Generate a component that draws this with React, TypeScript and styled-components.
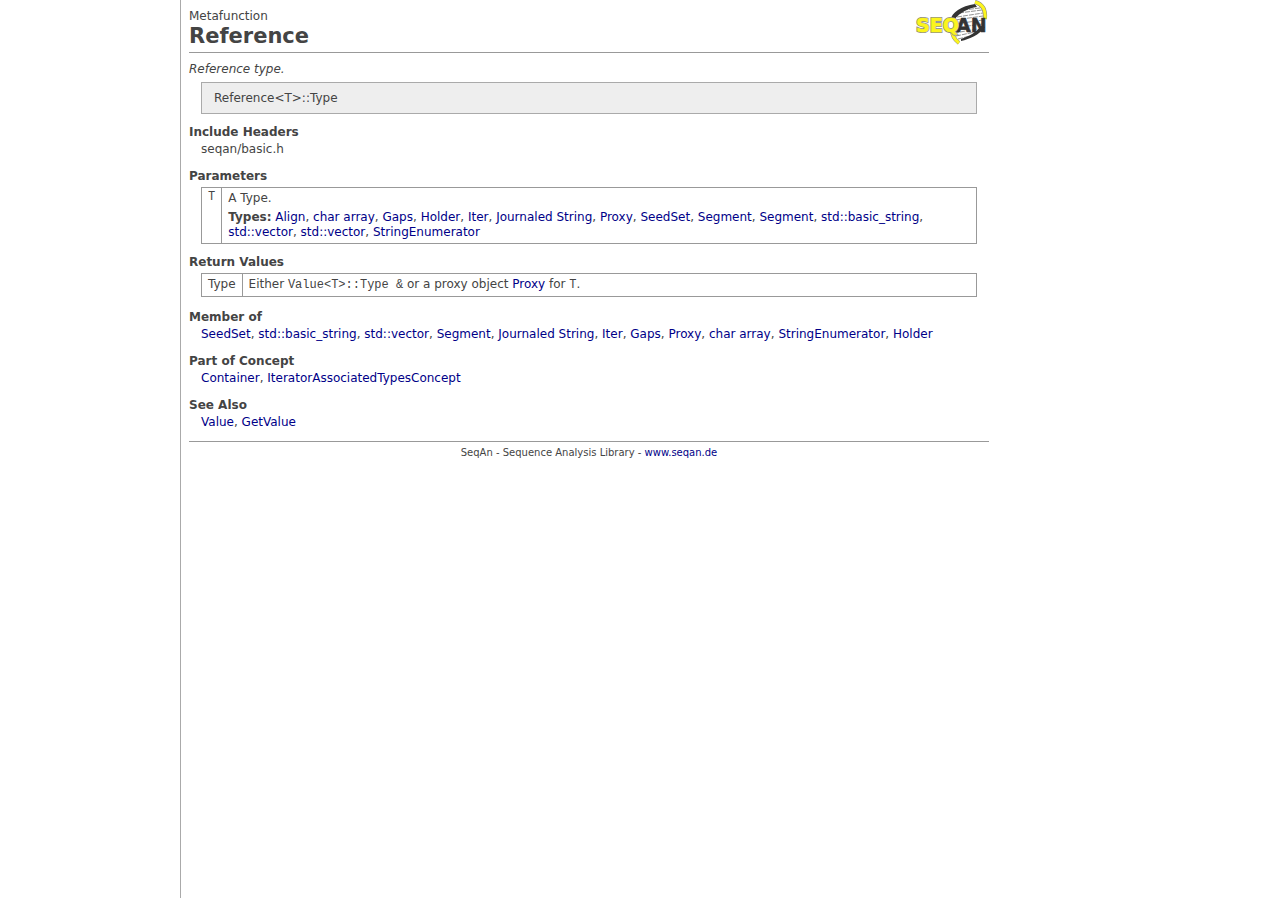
import React from "react";
import styled, { createGlobalStyle } from "styled-components";

const GlobalStyle = createGlobalStyle`
  body {
    margin: 0;
    background: #fff;
    color: #444;
    font: 12px/15px Verdana, "DejaVu Sans", sans-serif;
  }
`;

const Page = styled.div`
  box-sizing: border-box;
  min-height: 100vh;
  margin-left: 180px;
  padding: 0 8px;
  border-left: 1px solid #aaa;
`;

const Content = styled.main`
  max-width: 800px;
`;

const Header = styled.header`
  display: flex;
  justify-content: space-between;
  align-items: flex-start;
  height: 52px;
  border-bottom: 1px solid #999;
`;

const Heading = styled.div`
  padding-top: 9px;
`;

const Title = styled.h1`
  margin: 0;
  font-size: 21px;
  line-height: 24px;
`;

const Logo = styled.svg`
  display: block;
  width: 74px;
  height: 48px;
`;

const Summary = styled.p`
  margin: 9px 0 5px;
  font-style: italic;
`;

const Signature = styled.div`
  margin: 0 12px;
  padding: 8px 12px 7px;
  background: #eee;
  border: 1px solid #aaa;
`;

const Section = styled.section`
  margin-top: 11px;
`;

const SectionTitle = styled.h2`
  margin: 0 0 2px;
  font-size: 12px;
  line-height: 15px;
`;

const SectionBody = styled.div`
  margin: 0 12px;
  padding-bottom: 1px;
`;

const TableBody = styled.div`
  margin: 0 12px;
  padding-top: 1px;
`;

const Relations = styled.div`
  padding-top: 2px;
`;

const Table = styled.table`
  width: 100%;
  border-collapse: collapse;
  border: 1px solid #999;
`;

const Term = styled.th`
  padding: 3px 6px;
  border-right: 1px solid #999;
  font-weight: normal;
  text-align: left;
  vertical-align: top;
  white-space: nowrap;
`;

const Detail = styled.td`
  width: 100%;
  padding: 3px 6px;
  vertical-align: top;
`;

const TypeList = styled.div`
  max-width: 720px;
  margin-top: 4px;
`;

const Code = styled.code`
  font: 12px/15px "Courier New", "Liberation Mono", monospace;
`;

const TermCode = styled(Code)`
  display: block;
  line-height: 12px;
`;

const Link = styled.a`
  color: #008;
  text-decoration: none;
`;

const Footer = styled.footer`
  margin-top: 10px;
  padding-top: 4px;
  border-top: 1px solid #999;
  font-size: 10px;
  line-height: 13px;
  text-align: center;
`;

function Links({ names }: { names: string[] }) {
  return (
    <>
      {names.map((name, i) => (
        <React.Fragment key={i}>
          {i > 0 && ", "}
          <Link href="#">{name}</Link>
        </React.Fragment>
      ))}
    </>
  );
}

function SeqanLogo() {
  return (
    <Logo viewBox="0 0 74 48" role="img" aria-label="SeqAn">
      <path d="M36 20C40 11 48 6 60 6L67 12L69 24C64 33 57 38 46 40L38 33Z" fill="#fff" />
      <g stroke="#777" strokeWidth="0.8" strokeDasharray="5 1">
        <path d="M48 10l17 -2M44 13l23 -3M42 17l26 -4M40 20l28 -4M40 24l28 -4M39 28l28 -4M39 33l24 -4M41 36l19 -4M43 39l12 -3" />
      </g>
      <path d="M35 21C37 12 46 6 60 4L62 7C54 8 45 12 39 20Z" fill="#333" />
      <path d="M46 41C55 39 64 35 70 27L66 26C61 32 55 36 46 39Z" fill="#333" />
      <path d="M60 2C67 4 71 9 70 19" fill="none" stroke="#888" strokeWidth="4" />
      <path d="M60 2C67 4 71 9 70 19" fill="none" stroke="#fcf51c" strokeWidth="3" />
      <path d="M37 30C37 36 40 40 44 43" fill="none" stroke="#888" strokeWidth="4" />
      <path d="M37 30C37 36 40 40 44 43" fill="none" stroke="#fcf51c" strokeWidth="3" />
      <g fontFamily='Verdana, "DejaVu Sans", sans-serif' fontSize="19" fontWeight="bold">
        <text x="41" y="32" fill="#333" stroke="#333" strokeWidth="0.5">AN</text>
        <text x="1" y="32" fill="none" stroke="#888" strokeWidth="2">SEQ</text>
        <text x="1" y="32" fill="#fcf51c" stroke="#fcf51c" strokeWidth="0.6" aria-hidden="true">SEQ</text>
      </g>
    </Logo>
  );
}

const parameterTypes = [
  "Align", "char array", "Gaps", "Holder", "Iter", "Journaled String", "Proxy",
  "SeedSet", "Segment", "Segment", "std::basic_string", "std::vector",
  "std::vector", "StringEnumerator",
];

const owners = [
  "SeedSet", "std::basic_string", "std::vector", "Segment", "Journaled String",
  "Iter", "Gaps", "Proxy", "char array", "StringEnumerator", "Holder",
];

export default function App() {
  return (
    <Page>
      <GlobalStyle />
      <Content>
        <Header>
          <Heading>
            <div>Metafunction</div>
            <Title>Reference</Title>
          </Heading>
          <SeqanLogo />
        </Header>
        <Summary>Reference type.</Summary>
        <Signature>Reference&lt;T&gt;::Type</Signature>
        <Section>
          <SectionTitle>Include Headers</SectionTitle>
          <SectionBody>seqan/basic.h</SectionBody>
        </Section>
        <Section>
          <SectionTitle>Parameters</SectionTitle>
          <TableBody>
            <Table>
              <tbody>
                <tr>
                  <Term scope="row"><TermCode>T</TermCode></Term>
                  <Detail>
                    A Type.
                    <TypeList>
                      <b>Types:</b> <Links names={parameterTypes} />
                    </TypeList>
                  </Detail>
                </tr>
              </tbody>
            </Table>
          </TableBody>
        </Section>
        <Section>
          <SectionTitle>Return Values</SectionTitle>
          <TableBody>
            <Table>
              <tbody>
                <tr>
                  <Term scope="row">Type</Term>
                  <Detail>
                    Either <Code>Value&lt;T&gt;::Type &amp;</Code> or a proxy object{" "}
                    <Link href="#">Proxy</Link> for <Code>T</Code>.
                  </Detail>
                </tr>
              </tbody>
            </Table>
          </TableBody>
        </Section>
        <Relations>
          <Section>
            <SectionTitle>Member of</SectionTitle>
            <SectionBody><Links names={owners} /></SectionBody>
          </Section>
          <Section>
            <SectionTitle>Part of Concept</SectionTitle>
            <SectionBody><Links names={["Container", "IteratorAssociatedTypesConcept"]} /></SectionBody>
          </Section>
          <Section>
            <SectionTitle>See Also</SectionTitle>
            <SectionBody><Links names={["Value", "GetValue"]} /></SectionBody>
          </Section>
        </Relations>
        <Footer>
          SeqAn - Sequence Analysis Library - <Link href="#">www.seqan.de</Link>
        </Footer>
      </Content>
    </Page>
  );
}
